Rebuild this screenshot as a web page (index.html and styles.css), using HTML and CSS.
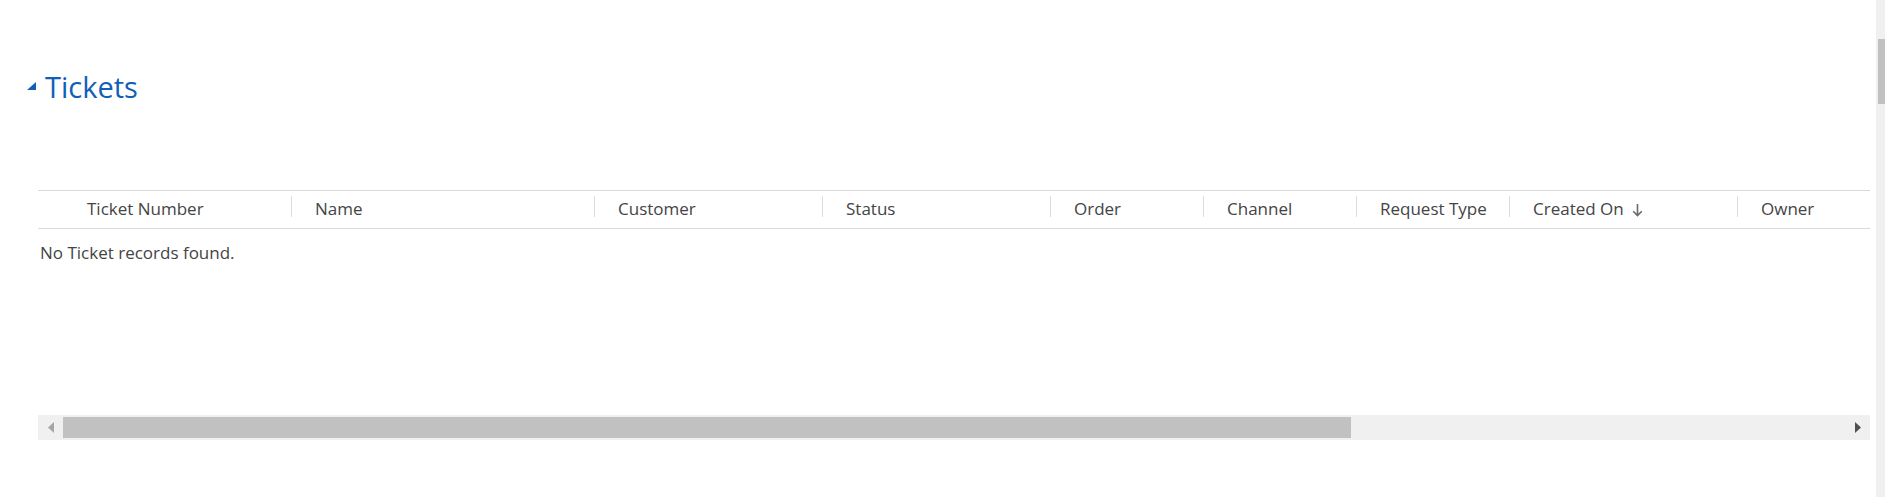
FILE: index.html
```html
<!DOCTYPE html>
<html lang="en">
<head>
<meta charset="utf-8">
<title>Tickets</title>
<link rel="stylesheet" href="styles.css">
</head>
<body>
<div class="page">
  <div class="section-title">
    <svg class="expander" width="9" height="8" viewBox="0 0 9 8"><polygon points="9,0 9,8 0,8" fill="#1160b7"/></svg>
    <h2 class="title">Tickets</h2>
  </div>
  <div class="grid">
    <div class="grid-header">
      <div class="col col-check"></div>
      <div class="col col-first w228">Ticket Number</div>
      <div class="col w303">Name</div>
      <div class="col w228">Customer</div>
      <div class="col w228">Status</div>
      <div class="col w153">Order</div>
      <div class="col w153">Channel</div>
      <div class="col w153">Request Type</div>
      <div class="col w228">Created On<svg class="sort" width="11" height="14" viewBox="0 0 11 14"><path d="M5.5 1V12.5M1.2 8.2L5.5 12.5L9.8 8.2" fill="none" stroke="#6a6a6a" stroke-width="1.6"/></svg></div>
      <div class="col w228">Owner</div>
    </div>
    <div class="grid-body">
      <div class="empty">No Ticket records found.</div>
    </div>
    <div class="hscroll">
      <div class="hbtn"><svg width="6" height="11" viewBox="0 0 6 11"><polygon points="6,0 6,11 0,5.5" fill="#a6a6a6"/></svg></div>
      <div class="hthumb"></div>
      <div class="hrest"></div>
      <div class="hbtn"><svg width="6" height="11" viewBox="0 0 6 11"><polygon points="0,0 0,11 6,5.5" fill="#505050"/></svg></div>
    </div>
  </div>
</div>
<div class="vscroll"><div class="vthumb"></div></div>
</body>
</html>
```

FILE: styles.css
```css
html, body {
  margin: 0;
  padding: 0;
  background: #ffffff;
}
body {
  display: flex;
  width: 1885px;
  height: 497px;
  overflow: hidden;
  font-family: "Open Sans", "Noto Sans", sans-serif;
}
.page {
  flex: 1;
  min-width: 0;
  padding-right: 6px;
}
.section-title {
  display: flex;
  align-items: center;
  padding-top: 67px;
  padding-left: 27px;
  height: 40px;
}
.expander {
  display: block;
  margin-right: 9px;
  margin-top: -2px;
}
.title {
  margin: 0;
  font-size: 29px;
  line-height: 40px;
  font-weight: 400;
  color: #1160b7;
}
.grid {
  margin-left: 38px;
  margin-top: 83px;
  overflow: hidden;
}
.grid-header {
  display: flex;
  height: 37px;
  border-top: 1px solid #d9d9d9;
  border-bottom: 1px solid #d9d9d9;
  overflow: hidden;
  white-space: nowrap;
}
.col {
  flex: none;
  display: flex;
  align-items: center;
  box-sizing: border-box;
  padding-bottom: 2px;
  font-size: 17px;
  color: #444444;
}
.col::before {
  content: "";
  flex: none;
  align-self: flex-start;
  width: 1px;
  height: 21px;
  margin-top: 5px;
  margin-right: 23px;
  background: #dcdcdc;
}
.col-check { width: 25px; }
.col-check::before { display: none; }
.col-first::before { background: transparent; }
.w153 { width: 153px; }
.w228 { width: 228px; }
.w303 { width: 303px; }
.sort {
  display: block;
  margin-left: 8px;
  margin-top: 2px;
}
.grid-body {
  height: 186px;
}
.empty {
  padding-top: 12px;
  padding-left: 2px;
  font-size: 17px;
  line-height: 23px;
  color: #444444;
}
.hscroll {
  display: flex;
  height: 25px;
  background: #f0f0f0;
}
.hbtn {
  flex: none;
  width: 25px;
  display: flex;
  align-items: center;
  justify-content: center;
}
.hthumb {
  flex: none;
  width: 1288px;
  margin: 2px 0;
  background: #c1c1c1;
}
.hrest { flex: 1; }
.vscroll {
  flex: none;
  width: 9px;
  background: #f0f0f0;
}
.vthumb {
  margin-top: 39px;
  margin-left: 2px;
  height: 65px;
  background: #c1c1c1;
}
```
